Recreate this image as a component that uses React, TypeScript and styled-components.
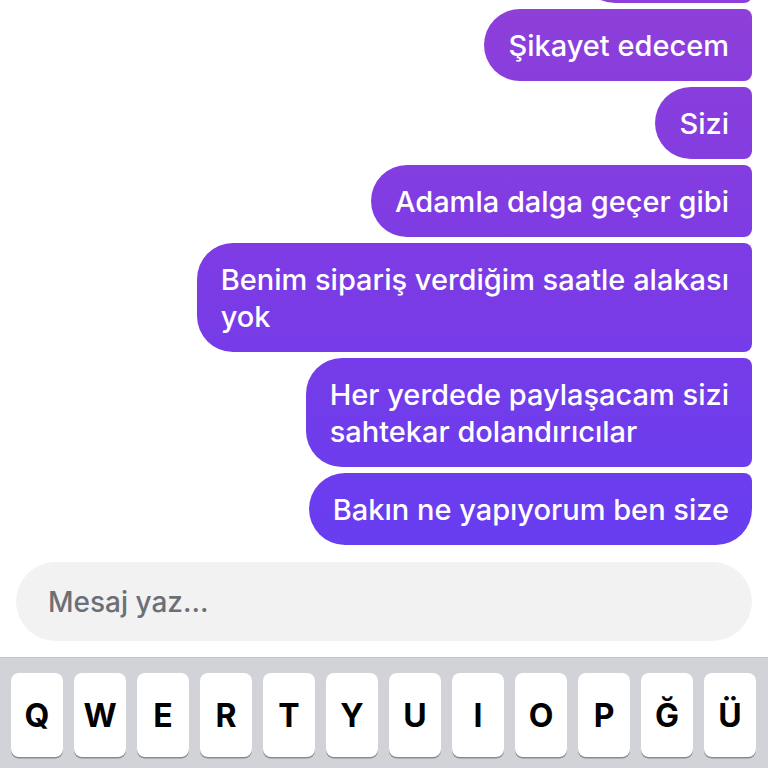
import styled, { createGlobalStyle } from "styled-components";

const GlobalStyle = createGlobalStyle`
  html, body {
    margin: 0;
    padding: 0;
    background: #ffffff;
    font-family: Inter, "Noto Sans", "Liberation Sans", sans-serif;
  }
  * {
    box-sizing: border-box;
  }
`;

// each message is stored as the lines it is shown in
const messages: { lines: string[]; last?: boolean }[] = [
  { lines: ["Ayıp ayıp"] },
  { lines: ["Şikayet edecem"] },
  { lines: ["Sizi"] },
  { lines: ["Adamla dalga geçer gibi"] },
  { lines: ["Benim sipariş verdiğim saatle alakası", "yok"] },
  { lines: ["Her yerdede paylaşacam sizi", "sahtekar dolandırıcılar"] },
  { lines: ["Bakın ne yapıyorum ben size"], last: true },
];

const keys = ["Q", "W", "E", "R", "T", "Y", "U", "I", "O", "P", "Ğ", "Ü"];

const App = () => {
  return (
    <>
      <GlobalStyle />
      <Screen>
        <Thread>
          {messages.map((m) => (
            <Bubble key={m.lines[0]} $last={m.last}>
              {m.lines.map((line) => (
                <Line key={line}>{line}</Line>
              ))}
            </Bubble>
          ))}
        </Thread>
        <Composer>
          <Input placeholder="Mesaj yaz..." />
        </Composer>
        <Keyboard>
          <KeyRow>
            {keys.map((k) => (
              <Key key={k}>{k}</Key>
            ))}
          </KeyRow>
        </Keyboard>
      </Screen>
    </>
  );
};

export default App;

const Screen = styled.div`
  width: 768px;
  height: 768px;
  display: flex;
  flex-direction: column;
  overflow: hidden;
  background: #ffffff;
`;

const Thread = styled.div`
  height: 552px;
  flex-shrink: 0;
  display: flex;
  flex-direction: column;
  justify-content: flex-end;
  align-items: flex-end;
  gap: 6px;
  padding: 0 16px 7px 16px;
  overflow: hidden;
`;

const Bubble = styled.div<{ $last?: boolean }>`
  flex-shrink: 0;
  max-width: 565px;
  padding: 17.5px 23px 17.5px 24px;
  border-radius: 36px 8px ${(p) => (p.$last ? "36px" : "8px")} 36px;
  background: linear-gradient(180deg, #8f3fd9 0px, #7a3be6 300px, #663ef1 560px);
  background-attachment: fixed;
  color: #ffffff;
  font-size: 29px;
  font-weight: 500;
  line-height: 37px;
`;

const Line = styled.div`
  white-space: nowrap;
`;

const Composer = styled.div`
  padding: 10px 16px 16px 16px;
  flex-shrink: 0;
`;

const Input = styled.input`
  width: 100%;
  height: 79px;
  border: none;
  outline: none;
  border-radius: 40px;
  background: #f2f2f3;
  padding: 0 32px;
  font-family: Inter, "Noto Sans", "Liberation Sans", sans-serif;
  font-size: 28px;
  font-weight: 500;
  color: #222;

  &::placeholder {
    color: #6c6f75;
  }
`;

const Keyboard = styled.div`
  flex: 1;
  background: #d1d3d9;
  border-top: 1px solid #c4c6cc;
  padding: 15px 11px 0 11px;
`;

const KeyRow = styled.div`
  display: flex;
  gap: 11px;
`;

const Key = styled.div`
  width: 52px;
  height: 84px;
  flex-shrink: 0;
  background: #ffffff;
  border-radius: 8px;
  box-shadow: 0 1.5px 0 #8a8b8f;
  display: flex;
  align-items: center;
  justify-content: center;
  font-size: 32px;
  font-weight: 700;
  color: #000000;
`;
